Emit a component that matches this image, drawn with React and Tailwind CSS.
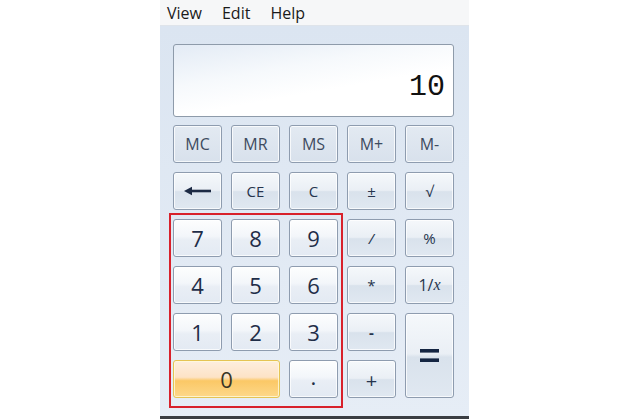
import React from "react";

const memKeys = ["MC", "MR", "MS", "M+", "M-"];

const base =
  "flex items-center justify-center rounded-[3px] border border-[#8e9caf] shadow-[inset_0_0_0_1px_rgba(255,255,255,0.75)]";
const memCls =
  base + " bg-gradient-to-b from-[#e3eaf2] to-[#d8e1ec] text-[16px] text-[#3d4b60]";
const opCls =
  base +
  " bg-[linear-gradient(to_bottom,#f5f8fb_0%,#eaeff5_48%,#d9e2ec_52%,#e0e8f1_100%)] text-[15px] text-[#26344d]";
const digitCls =
  base +
  " bg-[linear-gradient(to_bottom,#fdfefe_0%,#f3f6fa_45%,#e9eef5_55%,#e3eaf3_100%)] text-[22px] text-[#1f2d48]";

const BackArrow = () => (
  <svg width="28" height="10" viewBox="0 0 28 10">
    <line x1="5" y1="5" x2="27" y2="5" stroke="#1c2a44" strokeWidth="2.6" />
    <path d="M0 5 L8 0.8 L8 9.2 Z" fill="#1c2a44" />
  </svg>
);

const Equals = () => (
  <svg width="19" height="14" viewBox="0 0 19 14">
    <rect x="0" y="0" width="19" height="3.6" fill="#142542" />
    <rect x="0" y="9.4" width="19" height="3.6" fill="#142542" />
  </svg>
);

export default function App() {
  return (
    <div
      className="w-[630px] h-[419px] bg-white flex pl-[160px]"
      style={{ fontFamily: '"Open Sans", "Noto Sans", sans-serif' }}
    >
      <div className="relative w-[309px] h-[419px] flex flex-col border-b-[3px] border-[#3a3d42]">
        <div className="h-[26px] flex items-center gap-[20px] pl-[7px] bg-[#f6f7f8] border-b border-[#dfe4ea] text-[16px] text-[#1a1a1a]">
          <span>View</span>
          <span>Edit</span>
          <span>Help</span>
        </div>
        <div className="flex-1 bg-gradient-to-b from-[#dbe5f1] to-[#e6edf6] pl-[13px] pt-[18px]">
          <div className="w-[281px] h-[73px] rounded-[3px] border border-[#8e9baa] bg-[linear-gradient(170deg,#e3ebf5_0%,#f6f9fc_35%,#ffffff_60%)] flex items-end justify-end pr-[8px] pb-[14px]">
            <span
              className="text-[30px] leading-none text-[#111]"
              style={{ fontFamily: '"Liberation Mono", "DejaVu Sans Mono", monospace' }}
            >
              10
            </span>
          </div>

          <div className="mt-[8px] grid grid-cols-[repeat(5,49px)] auto-rows-[38px] gap-x-[9px] gap-y-[9px]">
            {memKeys.map((k) => (
              <div key={k} className={memCls}>
                {k}
              </div>
            ))}

            <div className={opCls}>
              <BackArrow />
            </div>
            <div className={opCls + " text-[14px]"}>CE</div>
            <div className={opCls}>C</div>
            <div className={opCls + " text-[14px]"}>±</div>
            <div className={opCls + " text-[14px]"}>√</div>

            <div className={digitCls}>7</div>
            <div className={digitCls}>8</div>
            <div className={digitCls}>9</div>
            <div className={opCls + " italic"}>/</div>
            <div className={opCls + " text-[14px]"}>%</div>

            <div className={digitCls}>4</div>
            <div className={digitCls}>5</div>
            <div className={digitCls}>6</div>
            <div className={opCls}>*</div>
            <div className={opCls + " text-[16px]"}>
              1/<span className="italic" style={{ fontFamily: '"Liberation Serif", serif' }}>x</span>
            </div>

            <div className={digitCls}>1</div>
            <div className={digitCls}>2</div>
            <div className={digitCls}>3</div>
            <div className={opCls + " font-bold"}>-</div>
            <div className={opCls + " row-span-2"}>
              <Equals />
            </div>

            <div className="col-span-2 flex items-center justify-center rounded-[3px] border border-[#e5c454] shadow-[inset_0_0_0_1px_rgba(255,250,220,0.8)] bg-[linear-gradient(to_bottom,#fdeedf_0%,#fde3c6_45%,#fbc866_55%,#fdd88a_100%)] text-[22px] text-[#3a3426]">
              0
            </div>
            <div className={digitCls + " items-end pb-[4px] text-[14px]"}>.</div>
            <div className={opCls + " text-[20px] pt-[4px]"}>+</div>
          </div>
        </div>

        <div className="absolute left-[9px] top-[213px] w-[174px] h-[195px] border-2 border-[#d8212b] pointer-events-none" />
      </div>
    </div>
  );
}
